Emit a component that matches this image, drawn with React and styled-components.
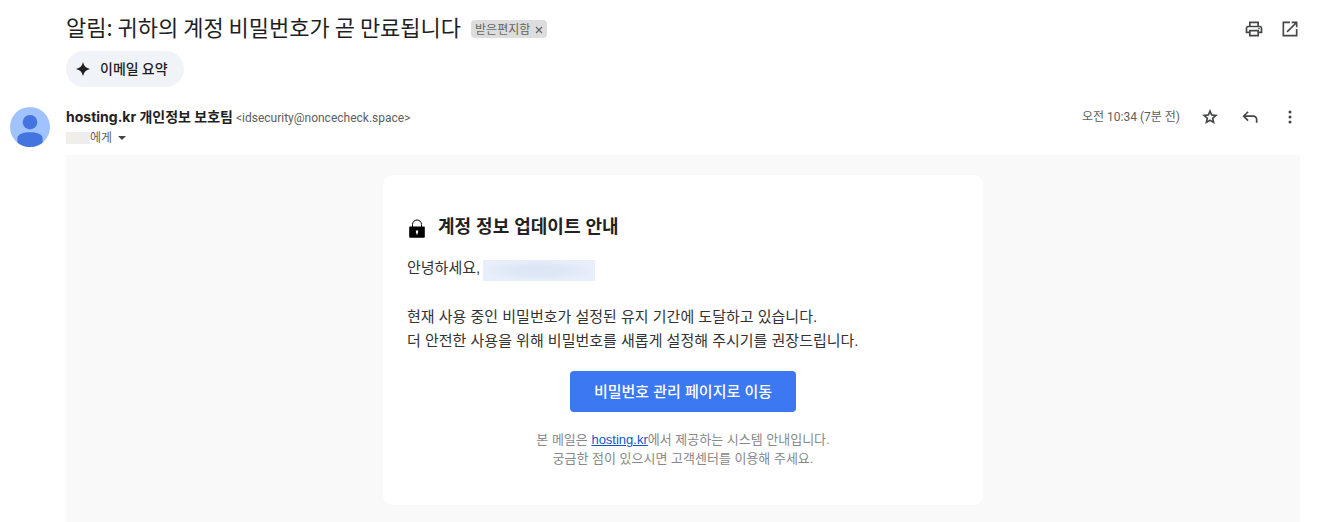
import React from 'react';
import styled, { createGlobalStyle } from 'styled-components';

const GlobalStyle = createGlobalStyle`
  * {
    box-sizing: border-box;
  }

  body {
    margin: 0;
    background: #fff;
    color: #1f1f1f;
    font-family: Roboto, 'Noto Sans CJK KR', sans-serif;
  }

  button {
    font: inherit;
    color: inherit;
    border: 0;
    padding: 0;
    background: none;
    cursor: pointer;
  }
`;

const Page = styled.main`
  padding: 12px 22px 0 10px;
`;

const SubjectBar = styled.header`
  display: flex;
  align-items: flex-start;
  gap: 10px;
  height: 34px;
  padding-left: 56px;
`;

const Subject = styled.h1`
  margin: 0;
  font: 400 22px/28px 'Noto Sans CJK KR', sans-serif;
`;

const Label = styled.span`
  display: flex;
  align-items: center;
  height: 18px;
  margin-top: 8px;
  padding: 0 4px;
  gap: 5px;
  border-radius: 4px;
  background: #ddd;
  color: #666;
  font: 400 12px/16px 'Noto Sans CJK KR', sans-serif;
`;

const LabelRemove = styled.button`
  display: flex;
  padding-top: 2px;
`;

const Actions = styled.div`
  display: flex;
  align-items: center;
  gap: ${({ $gap }) => $gap}px;
  height: ${({ $height }) => $height}px;
  margin-left: auto;
  color: #444746;
`;

const IconButton = styled.button`
  display: flex;
  width: 20px;
  height: 20px;

  svg {
    width: 20px;
    height: 20px;
    fill: currentColor;
  }
`;

const SummaryButton = styled.button`
  && {
    display: flex;
    align-items: center;
    gap: 8px;
    height: 36px;
    margin: 5px 0 0 56px;
    padding: 0 16px 2px 8px;
    border-radius: 18px;
    background: #f0f4f9;
    font: 500 14px/20px 'Noto Sans CJK KR', sans-serif;
  }
`;

const Sender = styled.section`
  display: flex;
  gap: 16px;
  margin-top: 20px;
  height: 48px;
`;

const Avatar = styled.svg`
  flex: none;
  width: 40px;
  height: 40px;
  border-radius: 50%;
`;

const SenderInfo = styled.div`
  display: flex;
  flex-direction: column;
`;

const SenderLine = styled.div`
  display: flex;
  align-items: baseline;
  gap: 3px;
  font-size: 12px;
  line-height: 20px;
  color: #5e5e5e;
`;

const SenderName = styled.span`
  color: #1f1f1f;
  font-family: Inter, 'Noto Sans CJK KR', sans-serif;
  font-size: 14px;
  font-weight: 700;
`;

const Recipient = styled.button`
  && {
    display: flex;
    align-items: center;
    font-size: 12px;
    line-height: 20px;
    color: #5e5e5e;
  }
`;

const HiddenName = styled.span`
  width: 24px;
  height: 12px;
  background: linear-gradient(90deg, #f3efe7, #ececee);
`;

const Caret = styled.svg`
  width: 8px;
  height: 4px;
  margin-left: 6px;
  fill: #444746;
`;

const Time = styled.span`
  color: #5e5e5e;
  font-size: 12px;
  line-height: 20px;
`;

const MessageBody = styled.article`
  margin-left: 56px;
  padding: 20px 16px 17px;
  background: #f9f9f9;
`;

const Card = styled.div`
  max-width: 600px;
  margin: 0 auto;
  padding: 40px 24px 37px;
  border-radius: 10px;
  background: #fff;
  color: #333;
  font: 400 15px/24px 'Liberation Sans', 'Noto Sans CJK KR', sans-serif;
`;

const CardTitle = styled.h2`
  display: flex;
  align-items: flex-start;
  gap: 11px;
  margin: 0 0 17px;
  color: #222;
  font-size: 18px;
  line-height: 24px;
`;

const LockIcon = styled.svg`
  width: 20px;
  height: 20px;
  margin-top: 4px;
`;

const Greeting = styled.p`
  display: flex;
  align-items: flex-start;
  gap: 3px;
  margin: 0 0 24px;
`;

const HiddenAddress = styled.span`
  width: 112px;
  height: 21px;
  margin-top: 4px;
  background: radial-gradient(closest-side, #dce6f5 40%, #e8effa);
`;

const Notice = styled.p`
  margin: 0;
`;

const ManageLink = styled.a`
  display: block;
  width: fit-content;
  margin: 18px auto;
  padding: 9px 24px 8px;
  border-radius: 4px;
  background: #3b78f2;
  color: #fff;
  font-weight: 500;
  text-decoration: none;
`;

const Footnote = styled.p`
  margin: 0;
  color: #888;
  font-size: 13px;
  line-height: 19px;
  text-align: center;

  a {
    color: #1155cc;
  }
`;

function SparkIcon() {
  return (
    <svg width="18" height="18" viewBox="0 0 18 18" fill="#1f1f1f" aria-hidden="true">
      <path d="M9 3Q10.200 8.800 16 10 10.200 11.200 9 17 7.800 11.200 2 10 7.800 8.800 9 3Z" />
    </svg>
  );
}

function PersonAvatar() {
  return (
    <Avatar viewBox="0 0 40 40" aria-hidden="true">
      <rect width="40" height="40" fill="#a0c3ff" />
      <circle cx="20" cy="15.2" r="7.3" fill="#4374e0" />
      <path d="M7.400 40v-9c0-4 6-5.800 12.600-5.800S32.600 27 32.600 31v9z" fill="#4374e0" />
    </Avatar>
  );
}

function PadlockIcon() {
  return (
    <LockIcon viewBox="0 0 20 20" aria-hidden="true">
      <path d="M5.500 9V5.500a4.500 4.500 0 0 1 9 0V9" fill="none" stroke="#000" strokeWidth="1" />
      <path d="M3 7.500h14a.8.8 0 0 1 .8.8V18a.8.8 0 0 1-.8.8H3a.8.8 0 0 1-.8-.8V8.300a.8.8 0 0 1 .8-.8z" />
      <path d="M8.900 11.500h2.200v2l-.5.500v1.500H9.400V14l-.5-.5z" fill="#fff" />
    </LockIcon>
  );
}

const icons = {
  print:
    'M19 8h-1V3H6v5H5c-1.660 0-3 1.340-3 3v6h4v4h12v-4h4v-6c0-1.660-1.340-3-3-3zM8 5h8v3H8V5zm8 12v2H8v-4h8v2zm2-2v-2H6v2H4v-4c0-.55.45-1 1-1h14c.55 0 1 .45 1 1v4h-2zM18 10.500a1 1 0 1 1 0 2 1 1 0 0 1 0-2z',
  open: 'M19 19H5V5h7V3H3v18h18v-9h-2v7zM14 3v2h3.590l-9.830 9.830 1.410 1.410L19 6.410V10h2V3h-7z',
  star:
    'M21.500 9.300l-6.800-.6L12 2.500 9.300 8.700l-6.800.6 5.200 4.500L6.200 20.500 12 17l5.800 3.500-1.500-6.700 5.200-4.500zM12 14.700l-2.900 1.800.8-3.400-2.600-2.200 3.400-.3L12 7.400l1.300 3.200 3.400.3-2.600 2.200.8 3.400L12 14.700z',
  reply: 'M19 19v-4c0-1.660-1.340-3-3-3H6.830l3.580 3.590L9 17l-6-6 6-6 1.410 1.410L6.830 10H16c2.760 0 5 2.240 5 5v4h-2z',
  more: 'M12 4.200a1.800 1.800 0 1 1 0 3.600 1.800 1.800 0 0 1 0-3.600zm0 6a1.800 1.800 0 1 1 0 3.600 1.800 1.800 0 0 1 0-3.600zm0 6a1.800 1.800 0 1 1 0 3.600 1.800 1.800 0 0 1 0-3.600z',
};

function Action({ icon, label }) {
  return (
    <IconButton type="button" aria-label={label}>
      <svg viewBox="0 0 24 24" aria-hidden="true">
        <path d={icons[icon]} />
      </svg>
    </IconButton>
  );
}

function App() {
  return (
    <>
      <GlobalStyle />
      <Page>
        <SubjectBar>
          <Subject>알림: 귀하의 계정 비밀번호가 곧 만료됩니다</Subject>
          <Label>
            받은편지함
            <LabelRemove type="button" aria-label="라벨 삭제">
              <svg width="8" height="8" viewBox="0 0 8 8" fill="none" stroke="#666" strokeWidth="1.2">
                <path d="M1 1l6 6M7 1L1 7" />
              </svg>
            </LabelRemove>
          </Label>
          <Actions $gap={16} $height={34}>
            <Action icon="print" label="모두 인쇄" />
            <Action icon="open" label="새 창에서 열기" />
          </Actions>
        </SubjectBar>

        <SummaryButton type="button">
          <SparkIcon />
          이메일 요약
        </SummaryButton>

        <Sender>
          <PersonAvatar />
          <SenderInfo>
            <SenderLine>
              <SenderName>hosting.kr 개인정보 보호팀</SenderName>
              <span>&lt;idsecurity@noncecheck.space&gt;</span>
            </SenderLine>
            <Recipient type="button">
              <HiddenName />
              에게
              <Caret viewBox="0 0 8 4" aria-hidden="true">
                <path d="M0 0h8L4 4z" />
              </Caret>
            </Recipient>
          </SenderInfo>
          <Actions $gap={20} $height={20}>
            <Time>오전 10:34 (7분 전)</Time>
            <Action icon="star" label="별표" />
            <Action icon="reply" label="답장" />
            <Action icon="more" label="더보기" />
          </Actions>
        </Sender>

        <MessageBody>
          <Card>
            <CardTitle>
              <PadlockIcon />
              계정 정보 업데이트 안내
            </CardTitle>
            <Greeting>
              안녕하세요,
              <HiddenAddress />
            </Greeting>
            <Notice>
              현재 사용 중인 비밀번호가 설정된 유지 기간에 도달하고 있습니다.
              <br />
              더 안전한 사용을 위해 비밀번호를 새롭게 설정해 주시기를 권장드립니다.
            </Notice>
            <ManageLink href="#manage">비밀번호 관리 페이지로 이동</ManageLink>
            <Footnote>
              본 메일은 <a href="#hosting">hosting.kr</a>에서 제공하는 시스템 안내입니다.
              <br />
              궁금한 점이 있으시면 고객센터를 이용해 주세요.
            </Footnote>
          </Card>
        </MessageBody>
      </Page>
    </>
  );
}

export default App;
